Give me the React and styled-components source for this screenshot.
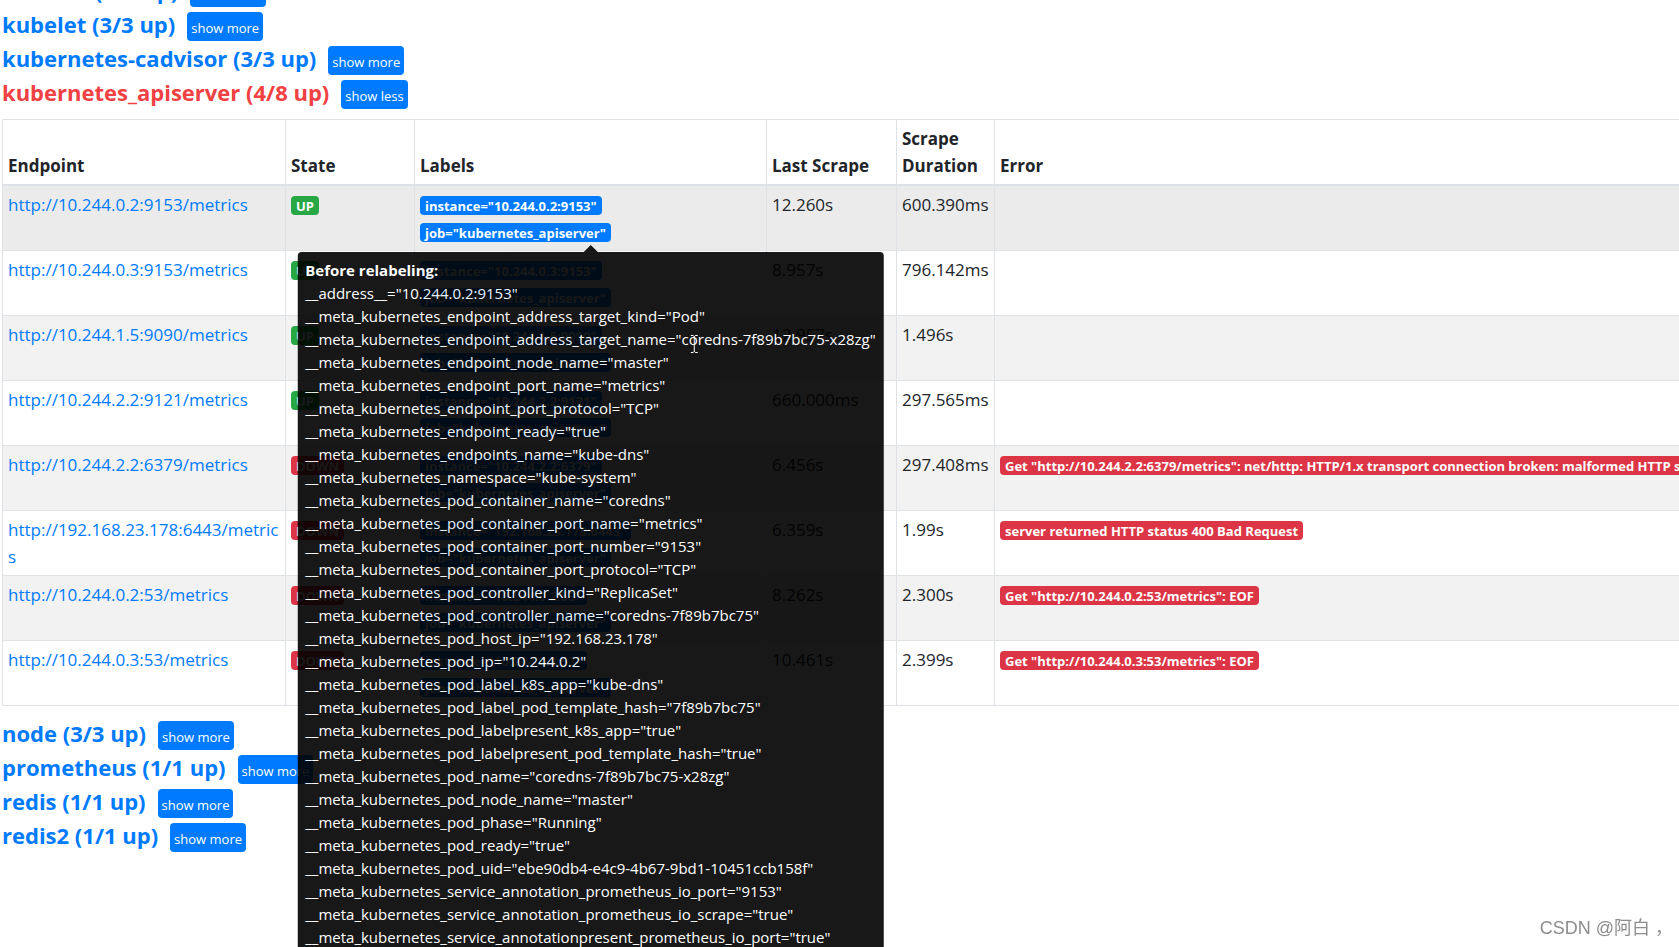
import React, {Fragment} from 'react'
import styled, {createGlobalStyle, ThemeProvider} from 'styled-components'

const theme = {
  colors: {
    text: '#212529',
    primary: '#007bff',
    success: '#28a745',
    danger: '#dc3545',
    unhealthy: '#f14142',
    border: '#dee2e6',
  },
}

const GlobalStyle = createGlobalStyle`
  *, *::before, *::after {
    box-sizing: border-box;
  }
  body {
    margin: 0;
    background: #fff;
    color: ${theme.colors.text};
    font-family: 'Segoe UI', 'Open Sans', 'Noto Sans', sans-serif;
    font-size: 17px;
    line-height: 27px;
  }
`

const Page = styled.main`
  min-height: 100vh;
  max-height: 100vh;
  padding-left: 2px;
  overflow: hidden;
`

// the page is scrolled part of the way through the first pool
const Pools = styled.div`
  margin-top: -22px;
`

const PoolHeader = styled.div`
  display: flex;
  align-items: flex-start;
  gap: 12px;
  height: 34px;
`

const PoolTitle = styled.h3`
  margin: 0;
  font-size: 22px;
  font-weight: 700;
  line-height: 24px;
`

const PoolLink = styled.a`
  color: ${({theme: {colors}, $healthy}) =>
    $healthy ? colors.primary : colors.unhealthy};
  text-decoration: none;
`

const ToggleButton = styled.button`
  height: 29px;
  padding: 3px 4px 0;
  border: 0;
  border-radius: 4px;
  background: ${({theme: {colors}}) => colors.primary};
  color: #fff;
  font-family: inherit;
  font-size: 13px;
  line-height: 24px;
`

// the last column holds unbroken error text and runs past the window
const Table = styled.table`
  width: calc(100% + 48px);
  margin: 5px 0 15px;
  border-collapse: collapse;
  table-layout: fixed;
`

const Column = styled.col`
  width: ${({$width}) => $width};
`

const HeadCell = styled.th`
  padding: 5px;
  border: 1px solid ${({theme: {colors}}) => colors.border};
  border-bottom-width: 2px;
  font-weight: 700;
  text-align: left;
  vertical-align: bottom;
`

const Row = styled.tr`
  height: 65px;
  &:nth-of-type(odd) {
    background: #f2f2f2;
  }
  &:first-of-type {
    background: #ebebeb;
  }
`

const Cell = styled.td`
  padding: 5px;
  border: 1px solid ${({theme: {colors}}) => colors.border};
  vertical-align: top;
  word-break: ${({$breakAll}) => ($breakAll ? 'break-all' : 'normal')};
`

const EndpointLink = styled.a`
  color: ${({theme: {colors}}) => colors.primary};
  text-decoration: none;
`

const Badge = styled.span`
  display: inline-block;
  height: 19px;
  padding: 1px 5px 0;
  border-radius: 4px;
  background: ${({theme: {colors}, $color}) => colors[$color]};
  color: #fff;
  font-size: 13px;
  font-weight: 700;
  line-height: 18px;
  white-space: nowrap;
`

const BadgeLine = styled.div`
  display: flex;
  align-items: center;
  height: 27px;
  padding-top: 2px;
`

const Labels = styled.div`
  position: relative;
`

const Tooltip = styled.div`
  position: absolute;
  z-index: 1;
  top: calc(100% + 7px);
  left: 50%;
  padding: 7px 8px;
  border-radius: 4px;
  background: #000;
  color: #fff;
  font-size: 15px;
  line-height: 23px;
  white-space: nowrap;
  opacity: 0.9;
  transform: translateX(-50%);
  &::before {
    content: '';
    position: absolute;
    bottom: 100%;
    left: calc(50% - 7px);
    border: 7px solid transparent;
    border-top-width: 0;
    border-bottom-color: #000;
  }
`

const TooltipTitle = styled.strong`
  display: block;
  font-weight: 700;
`

const TextCursor = styled.svg`
  position: absolute;
  top: 82px;
  left: 392px;
`

const Watermark = styled.div`
  position: fixed;
  right: 6px;
  bottom: 5px;
  color: #8c8c8c;
  font-family: 'Liberation Sans', 'Noto Sans CJK SC', sans-serif;
  font-size: 18px;
`

const poolsBefore = [
  {name: 'coredns', up: 3, total: 3},
  {name: 'kubelet', up: 3, total: 3},
  {name: 'kubernetes-cadvisor', up: 3, total: 3},
]

const poolsAfter = [
  {name: 'node', up: 3, total: 3},
  {name: 'prometheus', up: 1, total: 1},
  {name: 'redis', up: 1, total: 1},
  {name: 'redis2', up: 1, total: 1},
]

const columns = [
  {title: 'Endpoint', width: '283px'},
  {title: 'State', width: '129px'},
  {title: 'Labels', width: '352px'},
  {title: 'Last Scrape', width: '130px'},
  {title: 'Scrape Duration', width: '98px'},
  {title: 'Error', width: 'auto'},
]

const targets = [
  {instance: '10.244.0.2:9153', up: true, last: '12.260s', duration: '600.390ms'},
  {instance: '10.244.0.3:9153', up: true, last: '8.957s', duration: '796.142ms'},
  {instance: '10.244.1.5:9090', up: true, last: '12.957s', duration: '1.496s'},
  {instance: '10.244.2.2:9121', up: true, last: '660.000ms', duration: '297.565ms'},
  {
    instance: '10.244.2.2:6379',
    last: '6.456s',
    duration: '297.408ms',
    error:
      'Get "http://10.244.2.2:6379/metrics": net/http: HTTP/1.x transport connection broken: malformed HTTP status code',
  },
  {
    instance: '192.168.23.178:6443',
    last: '6.359s',
    duration: '1.99s',
    error: 'server returned HTTP status 400 Bad Request',
  },
  {
    instance: '10.244.0.2:53',
    last: '8.262s',
    duration: '2.300s',
    error: 'Get "http://10.244.0.2:53/metrics": EOF',
  },
  {
    instance: '10.244.0.3:53',
    last: '10.461s',
    duration: '2.399s',
    error: 'Get "http://10.244.0.3:53/metrics": EOF',
  },
]

const discoveredLabels = [
  ['__address__', '10.244.0.2:9153'],
  ['__meta_kubernetes_endpoint_address_target_kind', 'Pod'],
  ['__meta_kubernetes_endpoint_address_target_name', 'coredns-7f89b7bc75-x28zg'],
  ['__meta_kubernetes_endpoint_node_name', 'master'],
  ['__meta_kubernetes_endpoint_port_name', 'metrics'],
  ['__meta_kubernetes_endpoint_port_protocol', 'TCP'],
  ['__meta_kubernetes_endpoint_ready', 'true'],
  ['__meta_kubernetes_endpoints_name', 'kube-dns'],
  ['__meta_kubernetes_namespace', 'kube-system'],
  ['__meta_kubernetes_pod_container_name', 'coredns'],
  ['__meta_kubernetes_pod_container_port_name', 'metrics'],
  ['__meta_kubernetes_pod_container_port_number', '9153'],
  ['__meta_kubernetes_pod_container_port_protocol', 'TCP'],
  ['__meta_kubernetes_pod_controller_kind', 'ReplicaSet'],
  ['__meta_kubernetes_pod_controller_name', 'coredns-7f89b7bc75'],
  ['__meta_kubernetes_pod_host_ip', '192.168.23.178'],
  ['__meta_kubernetes_pod_ip', '10.244.0.2'],
  ['__meta_kubernetes_pod_label_k8s_app', 'kube-dns'],
  ['__meta_kubernetes_pod_label_pod_template_hash', '7f89b7bc75'],
  ['__meta_kubernetes_pod_labelpresent_k8s_app', 'true'],
  ['__meta_kubernetes_pod_labelpresent_pod_template_hash', 'true'],
  ['__meta_kubernetes_pod_name', 'coredns-7f89b7bc75-x28zg'],
  ['__meta_kubernetes_pod_node_name', 'master'],
  ['__meta_kubernetes_pod_phase', 'Running'],
  ['__meta_kubernetes_pod_ready', 'true'],
  ['__meta_kubernetes_pod_uid', 'ebe90db4-e4c9-4b67-9bd1-10451ccb158f'],
  ['__meta_kubernetes_service_annotation_prometheus_io_port', '9153'],
  ['__meta_kubernetes_service_annotation_prometheus_io_scrape', 'true'],
  ['__meta_kubernetes_service_annotationpresent_prometheus_io_port', 'true'],
]

const Pool = ({name, up, total, expanded}) => (
  <PoolHeader>
    <PoolTitle>
      <PoolLink href={`#pool-${name}`} $healthy={up === total}>
        {`${name} (${up}/${total} up)`}
      </PoolLink>
    </PoolTitle>
    <ToggleButton type="button" aria-expanded={Boolean(expanded)}>
      {expanded ? 'show less' : 'show more'}
    </ToggleButton>
  </PoolHeader>
)

const LabelsTooltip = () => (
  <Tooltip role="tooltip">
    <TooltipTitle>Before relabeling:</TooltipTitle>
    {discoveredLabels.map(([name, value]) => (
      <div key={name}>{`${name}="${value}"`}</div>
    ))}
    <TextCursor width="9" height="20" viewBox="0 0 9 20" aria-hidden="true">
      <path
        d="M1 1.5h2.5l1 1 1-1H8M4.5 2v16M1 18.5h2.5l1-1 1 1H8"
        fill="none"
        stroke="#fff"
      />
    </TextCursor>
  </Tooltip>
)

const TargetRow = ({target, showTooltip}) => {
  const {instance, up, last, duration, error} = target
  const url = `http://${instance}/metrics`
  return (
    <Row>
      <Cell $breakAll>
        <EndpointLink href={url}>{url}</EndpointLink>
      </Cell>
      <Cell>
        <BadgeLine>
          <Badge $color={up ? 'success' : 'danger'}>{up ? 'UP' : 'DOWN'}</Badge>
        </BadgeLine>
      </Cell>
      <Cell>
        <Labels>
          <BadgeLine>
            <Badge $color="primary">{`instance="${instance}"`}</Badge>
          </BadgeLine>
          <BadgeLine>
            <Badge $color="primary">job="kubernetes_apiserver"</Badge>
          </BadgeLine>
          {showTooltip && <LabelsTooltip />}
        </Labels>
      </Cell>
      <Cell>{last}</Cell>
      <Cell>{duration}</Cell>
      <Cell>
        {error && (
          <BadgeLine>
            <Badge $color="danger">{error}</Badge>
          </BadgeLine>
        )}
      </Cell>
    </Row>
  )
}

const App = () => (
  <ThemeProvider theme={theme}>
    <Fragment>
      <GlobalStyle />
      <Page>
        <Pools>
          {poolsBefore.map(pool => (
            <Pool key={pool.name} {...pool} />
          ))}
          <Pool name="kubernetes_apiserver" up={4} total={8} expanded />
          <Table>
            <colgroup>
              {columns.map(({title, width}) => (
                <Column key={title} $width={width} />
              ))}
            </colgroup>
            <thead>
              <tr>
                {columns.map(({title}) => (
                  <HeadCell key={title} scope="col">
                    {title}
                  </HeadCell>
                ))}
              </tr>
            </thead>
            <tbody>
              {targets.map((target, index) => (
                <TargetRow
                  key={target.instance}
                  target={target}
                  showTooltip={index === 0}
                />
              ))}
            </tbody>
          </Table>
          {poolsAfter.map(pool => (
            <Pool key={pool.name} {...pool} />
          ))}
        </Pools>
      </Page>
      <Watermark>CSDN @阿白 ，</Watermark>
    </Fragment>
  </ThemeProvider>
)

export default App
